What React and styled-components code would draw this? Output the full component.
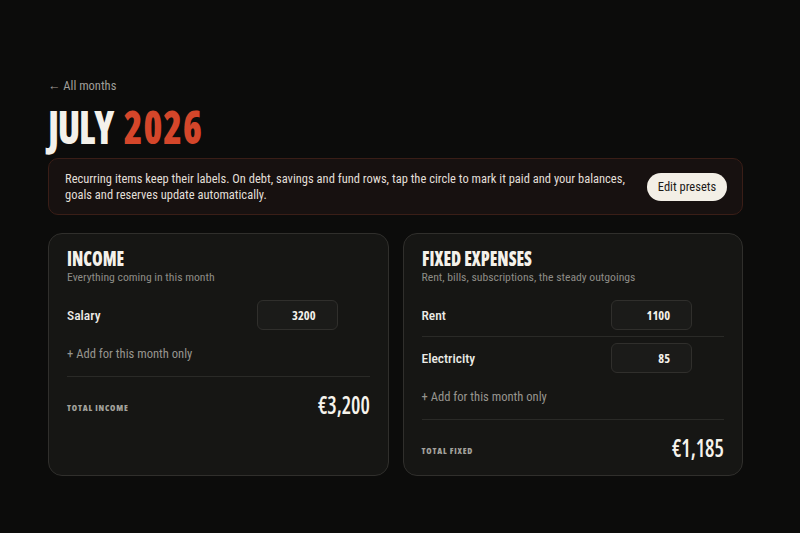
import React from "react";
import styled, { createGlobalStyle } from "styled-components";

const GlobalStyle = createGlobalStyle`
  html, body { margin: 0; padding: 0; background: #0c0c0b; }
  body {
    font-family: "Roboto Condensed", "Roboto", "Liberation Sans", Arial, sans-serif;
    color: #ecebe6;
    -webkit-font-smoothing: antialiased;
  }
  * { box-sizing: border-box; }
`;

/* Condensed display face used by headings and totals */
const display = `
  font-family: "Open Sans", "Roboto Condensed", sans-serif;
  font-stretch: 75%;
  font-weight: 800;
  white-space: nowrap;
  display: inline-block;
`;

const Page = styled.main`
  width: 695px;
  margin-left: 48px;
  padding-top: 78px;
  display: flex;
  flex-direction: column;
  align-items: flex-start;
`;

const BackLink = styled.a`
  font-size: 12.5px;
  line-height: 16px;
  color: #a09f99;
  text-decoration: none;
`;

const Title = styled.h1`
  ${display}
  margin: 8px 0 0;
  font-size: 46px;
  line-height: 48px;
  word-spacing: 5px;
  transform: scaleX(0.83);
  transform-origin: left center;
`;

const TitleWord = styled.span`
  color: ${(p) => (p.$accent ? "#d4462a" : "#f4f1ea")};
  letter-spacing: ${(p) => (p.$accent ? "1px" : "-1.5px")};
`;

const Notice = styled.section`
  align-self: stretch;
  margin-top: 8px;
  display: flex;
  align-items: center;
  gap: 16px;
  padding: 12px 15px 12px 16px;
  border: 1px solid #3a1e17;
  border-radius: 10px;
  background: #171110;
`;

const NoticeText = styled.p`
  flex: 1;
  margin: 0;
  font-size: 12.5px;
  line-height: 15.5px;
  color: #e2dfd8;
`;

const PillButton = styled.button`
  flex: none;
  height: 28px;
  width: 80px;
  padding: 0;
  border: none;
  border-radius: 14px;
  background: #f3efe6;
  color: #1b1a18;
  font-family: inherit;
  font-size: 12.5px;
`;

const Grid = styled.div`
  align-self: stretch;
  margin-top: 18px;
  display: grid;
  grid-template-columns: 1fr 1fr;
  gap: 14px;
`;

const Card = styled.section`
  padding: 14px 18px 13px;
  border: 1px solid #302f2c;
  border-radius: 14px;
  background: #161614;
  display: flex;
  flex-direction: column;
  align-items: stretch;
`;

const CardTitle = styled.h2`
  ${display}
  margin: 0 0 2px;
  align-self: flex-start;
  font-size: 21px;
  line-height: 20px;
  color: #f4f1ea;
  transform: scaleX(0.82);
  transform-origin: left center;
`;

const CardSub = styled.p`
  margin: 0 0 10px;
  font-size: 11.7px;
  line-height: 14px;
  color: #8d8c86;
`;

const Row = styled.div`
  display: flex;
  align-items: center;
  gap: 8px;
  padding: 6px 0;
  border-top: ${(p) => (p.$divided ? "1px solid #2a2a27" : "none")};
`;

const RowLabel = styled.span`
  flex: 1;
  font-size: 13.5px;
  font-weight: 500;
  color: #ecebe6;
`;

const Amount = styled.div`
  width: 81px;
  height: 30px;
  padding-right: 21px;
  display: flex;
  align-items: center;
  justify-content: flex-end;
  border: 1px solid #302f2c;
  border-radius: 6px;
  background: #1b1b19;
  font-family: "Open Sans", sans-serif;
  font-weight: 700;
  font-stretch: 75%;
  font-size: 12.5px;
  color: #f4f1ea;
`;

const RowSlot = styled.span`
  width: 24px;
`;

const AddLink = styled.div`
  padding: 10px 0 14px;
  font-size: 12.6px;
  line-height: 16px;
  color: #96958f;
  border-bottom: 1px solid #2a2a27;
`;

const TotalRow = styled.div`
  display: flex;
  align-items: center;
  justify-content: space-between;
  padding-top: 12px;
`;

const TotalLabel = styled.span`
  ${display}
  margin-top: 8px;
  font-size: 8.6px;
  letter-spacing: 0.8px;
  color: #a3a29c;
`;

const TotalValue = styled.span`
  ${display}
  font-weight: 600;
  font-size: 25px;
  line-height: 30px;
  color: #f6f3ec;
  transform: scaleX(0.84);
  transform-origin: right center;
`;

const sections = [
  {
    title: "INCOME",
    sub: "Everything coming in this month",
    rows: [{ label: "Salary", value: "3200" }],
    totalLabel: "TOTAL INCOME",
    total: "€3,200",
  },
  {
    title: "FIXED EXPENSES",
    sub: "Rent, bills, subscriptions, the steady outgoings",
    rows: [
      { label: "Rent", value: "1100" },
      { label: "Electricity", value: "85" },
    ],
    totalLabel: "TOTAL FIXED",
    total: "€1,185",
  },
];

export default function App() {
  return (
    <>
      <GlobalStyle />
      <Page>
        <BackLink href="#">← All months</BackLink>
        <Title>
          <TitleWord>JULY</TitleWord> <TitleWord $accent>2026</TitleWord>
        </Title>
        <Notice>
          <NoticeText>
            Recurring items keep their labels. On debt, savings and fund rows, tap the circle to mark it
            paid and your balances, goals and reserves update automatically.
          </NoticeText>
          <PillButton>Edit presets</PillButton>
        </Notice>
        <Grid>
          {sections.map((s) => (
            <Card key={s.title}>
              <CardTitle>{s.title}</CardTitle>
              <CardSub>{s.sub}</CardSub>
              {s.rows.map((r, i) => (
                <Row key={r.label} $divided={i > 0}>
                  <RowLabel>{r.label}</RowLabel>
                  <Amount>{r.value}</Amount>
                  <RowSlot />
                </Row>
              ))}
              <AddLink>+ Add for this month only</AddLink>
              <TotalRow>
                <TotalLabel>{s.totalLabel}</TotalLabel>
                <TotalValue>{s.total}</TotalValue>
              </TotalRow>
            </Card>
          ))}
        </Grid>
      </Page>
    </>
  );
}
